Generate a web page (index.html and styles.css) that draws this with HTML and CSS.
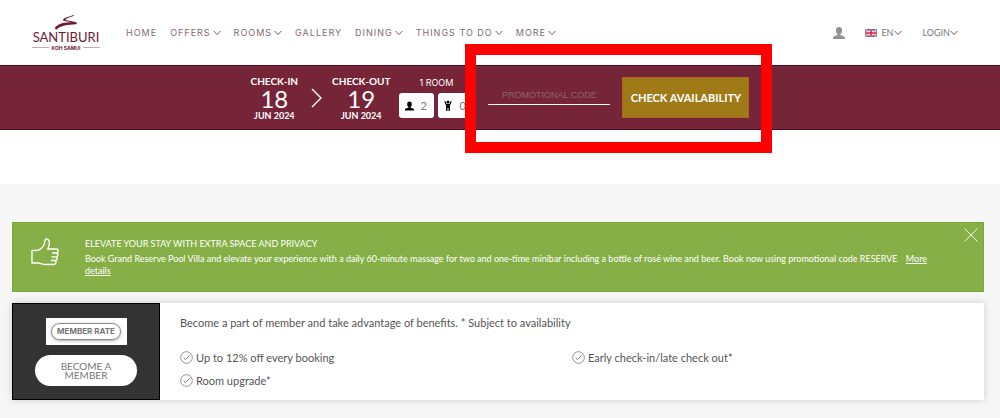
FILE: index.html
```html
<!DOCTYPE html>
<html lang="en">
<head>
<meta charset="utf-8">
<meta name="viewport" content="width=device-width, initial-scale=1">
<title>Santiburi Koh Samui</title>
<link rel="stylesheet" href="styles.css">
</head>
<body>
<svg class="defs" aria-hidden="true">
  <symbol id="chev" viewBox="0 0 8 6"><path d="M.7 1 4 4.600 7.300 1" fill="none" stroke="currentColor" stroke-width="1"/></symbol>
  <symbol id="person" viewBox="0 0 12 12"><path d="M6 0c2 0 3.100 1.500 3.100 3.500C9.100 5.200 8.300 6.500 7.500 7.100v.9c0 .5 4.500.9 4.500 2.800V12H0v-1.200C0 8.900 4.500 8.500 4.500 8v-.9C3.700 6.500 2.900 5.200 2.900 3.500 2.900 1.500 4 0 6 0z" fill="currentColor"/></symbol>
  <symbol id="tick" viewBox="0 0 13 13"><circle cx="6.500" cy="6.500" r="5.800" fill="none" stroke="currentColor" stroke-width=".8"/><path d="M3.700 6.800 5.600 8.600 9.300 4.600" fill="none" stroke="currentColor"/></symbol>
</svg>

<header class="topbar">
  <a class="logo" href="#">
    <svg class="logo-mark" viewBox="0 0 22 15" aria-hidden="true"><path d="M19 0C14 1.500 8 3 8 4.900c0 1.300 5 1.600 9.500 2.100C10 7.200 3 8.500.3 12.300c-.7 1.200.3 3 1.700 1.900C5 10.800 13 9.800 21 9.300c1.200-.4 1.200-1.600 0-2C17 5.800 10.500 5.600 10.500 4.700 10.500 3.800 15.500 2 19 .8z" fill="currentColor"/></svg>
    <span class="logo-name">SANTIBURI</span>
    <span class="logo-sub">KOH SAMUI</span>
  </a>
  <nav class="menu">
    <a href="#">HOME</a>
    <a href="#">OFFERS<svg class="chev"><use href="#chev"/></svg></a>
    <a href="#">ROOMS<svg class="chev"><use href="#chev"/></svg></a>
    <a href="#">GALLERY</a>
    <a href="#">DINING<svg class="chev"><use href="#chev"/></svg></a>
    <a href="#">THINGS TO DO<svg class="chev"><use href="#chev"/></svg></a>
    <a href="#">MORE<svg class="chev"><use href="#chev"/></svg></a>
  </nav>
  <div class="account">
    <a class="profile" href="#" aria-label="Profile"><svg class="person"><use href="#person"/></svg></a>
    <button class="drop lang" type="button">
      <svg class="flag" viewBox="0 0 12 8" aria-hidden="true"><path d="M0 0h12v8H0z" fill="#283a82"/><path d="M0 0l12 8M12 0 0 8" stroke="#fff" stroke-width="1.700"/><path d="M0 0l12 8M12 0 0 8" stroke="#d0223c" stroke-width=".7"/><path d="M6 0v8M0 4h12" stroke="#fff" stroke-width="2.800"/><path d="M6 0v8M0 4h12" stroke="#d0223c" stroke-width="1.500"/></svg>
      <span>EN</span><svg class="chev"><use href="#chev"/></svg>
    </button>
    <button class="drop" type="button"><span>LOGIN</span><svg class="chev"><use href="#chev"/></svg></button>
  </div>
</header>

<form class="booking">
  <button class="date" type="button"><b>CHECK-IN</b><span class="day">18</span><span class="month">JUN 2024</span></button>
  <svg class="arrow" viewBox="0 0 12 20" aria-hidden="true"><path d="M1 1l9 9-9 9" fill="none" stroke="currentColor" stroke-width="1.400"/></svg>
  <button class="date" type="button"><b>CHECK-OUT</b><span class="day">19</span><span class="month">JUN 2024</span></button>
  <div class="guests">
    <span class="rooms">1 ROOM</span>
    <div class="counts">
      <label class="count"><svg class="adult"><use href="#person"/></svg><select aria-label="Adults"><option>2</option></select></label>
      <label class="count"><svg class="child" viewBox="0 0 8 11"><circle cx="4" cy="2" r="1.600" fill="currentColor"/><path d="M.2 1.500 1.200 1 2.500 4h3L6.800 1l1 .5L5.900 5.800V11H4.500V8h-1v3H2.100V5.800z" fill="currentColor"/></svg><select aria-label="Children"><option>0</option></select></label>
    </div>
  </div>
  <input class="promo" type="text" placeholder="PROMOTIONAL CODE" aria-label="Promotional code">
  <button class="submit" type="button">CHECK AVAILABILITY</button>
  <div class="highlight"></div>
</form>

<main class="content">
  <section class="notice">
    <svg class="thumb" viewBox="0 0 28 28" aria-hidden="true"><path d="M1 12.500H5.500C9 12.500 12.500 9 13.400 5.600L14 2.500C14.500.6 16 .7 17 1.500c2.500 2.300 1.200 6.500-.3 9.500H25c3 0 2.800 3.700.5 4 2 .6 1.800 3.600-.5 3.900 1.700.7 1.400 3.300-.8 3.600 1.500.8.800 4-1.700 4H15c-4 0-5.500-1.500-8-1.500H1zM21.500 15h4M21 18.900h4M20.500 22.500h4" fill="none" stroke="currentColor" stroke-width="1.400" stroke-linejoin="round" stroke-linecap="round"/></svg>
    <div class="notice-text">
      <h2>ELEVATE YOUR STAY WITH EXTRA SPACE AND PRIVACY</h2>
      <p>Book Grand Reserve Pool Villa and elevate your experience with a daily 60-minute massage for two and one-time minibar including a bottle of rosé wine and beer. Book now using promotional code RESERVE <a href="#">More details</a></p>
    </div>
    <button class="close" type="button" aria-label="Close"><svg viewBox="0 0 14 14"><path d="M.5.500l13 13M13.500.500l-13 13" stroke="currentColor" stroke-width=".9"/></svg></button>
  </section>

  <section class="member">
    <div class="member-side">
      <div class="rate"><span>MEMBER RATE</span></div>
      <button class="join" type="button">BECOME A MEMBER</button>
    </div>
    <div class="member-info">
      <p>Become a part of member and take advantage of benefits. * Subject to availability</p>
      <ul>
        <li><svg><use href="#tick"/></svg>Up to 12% off every booking</li>
        <li><svg><use href="#tick"/></svg>Early check-in/late check out*</li>
        <li><svg><use href="#tick"/></svg>Room upgrade*</li>
      </ul>
    </div>
  </section>
</main>
</body>
</html>
```

FILE: styles.css
```css
* { box-sizing: border-box; }
html { height: 100%; }
body {
  margin: 0;
  min-height: 100%;
  display: flex;
  flex-direction: column;
  background: #fff;
  font-family: Lato, "Liberation Sans", sans-serif;
  color: #555;
}
button, input, select { font-family: inherit; margin: 0; padding: 0; border: 0; background: none; color: inherit; }
a { color: inherit; text-decoration: none; }
h2, p, ul { margin: 0; padding: 0; }
.defs { position: absolute; width: 0; height: 0; }

.topbar { display: flex; align-items: center; height: 65px; padding: 0 42px 0 32px; }
.logo { display: flex; flex-direction: column; align-items: center; width: 68px; color: #6b1a33; margin-right: 26px; }
.logo-mark { width: 22px; height: 15px; }
.logo-name { font-size: 13px; line-height: 15px; }
.logo-sub { display: flex; align-items: center; gap: 3px; width: 100%; font: bold 5px/6px Inter, sans-serif; white-space: nowrap; }
.logo-sub::before, .logo-sub::after { content: ""; flex: 1; border-top: 1px solid #c9aab3; }

.menu { display: flex; gap: 13px; font: 9px/12px Inter, sans-serif; letter-spacing: 1px; color: #806b70; white-space: nowrap; }
.menu a { display: flex; align-items: center; gap: 2px; }
.chev { width: 8px; height: 6px; color: #8a4f60; }
.account { display: flex; align-items: center; margin-left: auto; color: #777; }
.profile { color: #939393; margin-right: 20px; line-height: 0; }
.person { width: 12px; height: 12px; }
.drop { display: flex; align-items: center; font-size: 9px; line-height: 12px; }
.lang { margin-right: 21px; }
.flag { width: 12px; height: 8px; margin-right: 4px; }

.booking {
  position: relative;
  display: flex;
  justify-content: center;
  height: 65px;
  background: #762538;
  border-top: 1px solid #550c20;
  border-bottom: 1px solid #550c20;
  color: #fff;
}
.date { display: flex; flex-direction: column; align-items: center; align-self: center; white-space: nowrap; }
.date b { font-size: 10px; line-height: 12px; }
.day { font-size: 24px; line-height: 24px; }
.month { font-size: 9px; line-height: 10px; font-weight: bold; }
.arrow { width: 12px; height: 20px; margin: 22px 9px 0 13px; }
.guests { display: flex; flex-direction: column; align-items: center; gap: 4px; margin: 11px 15px 0 9px; }
.rooms { font: 9px/12px Inter, sans-serif; }
.counts { display: flex; gap: 4px; }
.count { display: flex; align-items: center; justify-content: space-between; width: 35px; height: 25px; padding: 0 7px 0 6px; border-radius: 3px; background: #fff; color: #000; }
.adult { width: 9px; height: 10px; }
.child { width: 8px; height: 11px; }
.count select { appearance: none; width: 7px; font-size: 11px; color: #777; }
.promo { width: 122px; height: 20px; margin: 19px 12px 0 0; border-bottom: 1px solid #fff; text-align: center; font: 9px/12px "Liberation Sans", sans-serif; }
.promo::placeholder { color: #8d626a; opacity: 1; }
.submit { width: 127px; height: 41px; margin-top: 11px; background: #a07a16; border: 1px solid #a96522; font-size: 11px; font-weight: bold; color: #fff; white-space: nowrap; }
.highlight { position: absolute; left: calc(50% - 35px); top: -22px; width: 307px; height: 109px; border: 11px solid #f00; pointer-events: none; }

.content { flex: 1; display: flex; flex-direction: column; gap: 11px; margin-top: 54px; padding: 38px 16px 17px 12px; background: #f7f7f7; }
.notice { position: relative; display: flex; padding: 15px 24px 14px 18px; background: #86b047; border: 1px solid #79a73b; color: #fff; }
.thumb { flex: none; width: 28px; height: 28px; margin-right: 26px; }
.notice-text { margin-right: 20px; }
.notice h2 { font-size: 9px; line-height: 12px; font-weight: normal; }
.notice p { margin-top: 3px; font-size: 9px; line-height: 12px; }
.notice p a { margin-left: 6px; text-decoration: underline; }
.close { position: absolute; top: 5px; right: 5px; width: 14px; height: 14px; line-height: 0; }
.close svg { width: 14px; height: 14px; }

.member { display: flex; background: #fff; box-shadow: 0 0 8px #ccc; }
.member-side { display: flex; flex-direction: column; align-items: center; gap: 10px; width: 148px; padding: 14px 22px 13px; background: #333; border: 1px solid #000; }
.rate { display: flex; align-items: center; justify-content: center; width: 81px; height: 27px; background: #fff; }
.rate span { padding: 2px 5px; border: 1px solid #888; border-radius: 9px; box-shadow: 0 1px 3px #aaa; font: bold 8px/11px Inter, sans-serif; color: #777; white-space: nowrap; }
.join { width: 102px; height: 31px; padding: 0 20px; border-radius: 16px; background: #fff; font-size: 10px; line-height: 9px; color: #777; }
.member-info { flex: 1; padding: 12px 20px; font-size: 11px; line-height: 15px; color: #555; }
.member-info ul { display: grid; grid-template-columns: 1fr 1fr; row-gap: 8px; margin-top: 20px; list-style: none; }
.member-info li { display: flex; align-items: center; gap: 3px; }
.member-info li svg { width: 13px; height: 13px; color: #777; }
```
